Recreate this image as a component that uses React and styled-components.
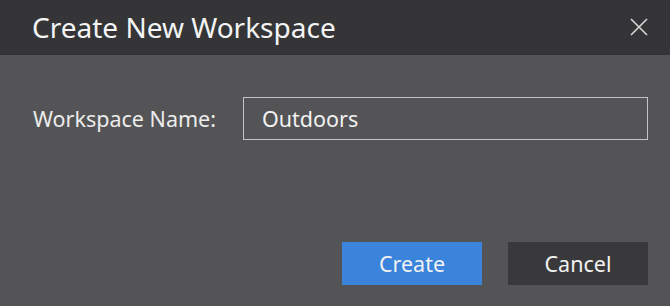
import React from "react"
import styled, { createGlobalStyle } from "styled-components"

const GlobalStyle = createGlobalStyle`
  html, body {
    margin: 0;
    padding: 0;
    background: #545456;
  }
  * {
    box-sizing: border-box;
  }
`

const Dialog = styled.div`
  display: flex;
  flex-flow: column nowrap;
  width: 670px;
  height: 306px;
  background: #545456;
  font-family: "Noto Sans", "Open Sans", sans-serif;
  color: #f2f2f2;
`

const Header = styled.div`
  display: flex;
  flex-flow: row nowrap;
  justify-content: space-between;
  align-items: center;
  height: 55px;
  padding: 0 22px 2px 32px;
  background: #353537;
`

const Title = styled.h1`
  margin: 0;
  font-size: 28px;
  font-weight: 400;
  color: #f4f4f4;
`

const CloseButton = styled.button`
  display: flex;
  align-items: center;
  justify-content: center;
  width: 30px;
  height: 30px;
  margin-right: -6px;
  padding: 0;
  border: none;
  background: none;
  color: #d8d8d8;
  cursor: pointer;
`

const Body = styled.div`
  display: flex;
  flex-flow: column nowrap;
  flex: 1;
  padding: 42px 22px 21px 33px;
`

const FieldRow = styled.div`
  display: grid;
  grid-template-columns: 210px 1fr;
  align-items: center;
`

const Label = styled.label`
  font-size: 21.5px;
  color: #ececec;
  white-space: nowrap;
`

const TextInput = styled.input`
  width: 100%;
  height: 43px;
  padding: 0 18px;
  border: 1px solid #c4c4c4;
  background: transparent;
  color: #f2f2f2;
  font-family: inherit;
  font-size: 21.5px;
  outline: none;
`

const Footer = styled.div`
  display: flex;
  flex-flow: row nowrap;
  justify-content: flex-end;
  gap: 26px;
  margin-top: auto;
`

const Button = styled.button`
  width: 140px;
  height: 43px;
  border: none;
  background: ${(p) => (p.$primary ? "#3a84dc" : "#39393b")};
  color: #f2f2f2;
  font-family: inherit;
  font-size: 21.5px;
  cursor: pointer;
`

const CloseIcon = () => (
  <svg width="18" height="18" viewBox="0 0 18 18" fill="none">
    <path d="M1 1L17 17M17 1L1 17" stroke="currentColor" strokeWidth="1.6" />
  </svg>
)

const App = () => (
  <>
    <GlobalStyle />
    <Dialog>
      <Header>
        <Title>Create New Workspace</Title>
        <CloseButton aria-label="Close">
          <CloseIcon />
        </CloseButton>
      </Header>
      <Body>
        <FieldRow>
          <Label>Workspace Name:</Label>
          <TextInput defaultValue="Outdoors" />
        </FieldRow>
        <Footer>
          <Button $primary>Create</Button>
          <Button>Cancel</Button>
        </Footer>
      </Body>
    </Dialog>
  </>
)

export default App
